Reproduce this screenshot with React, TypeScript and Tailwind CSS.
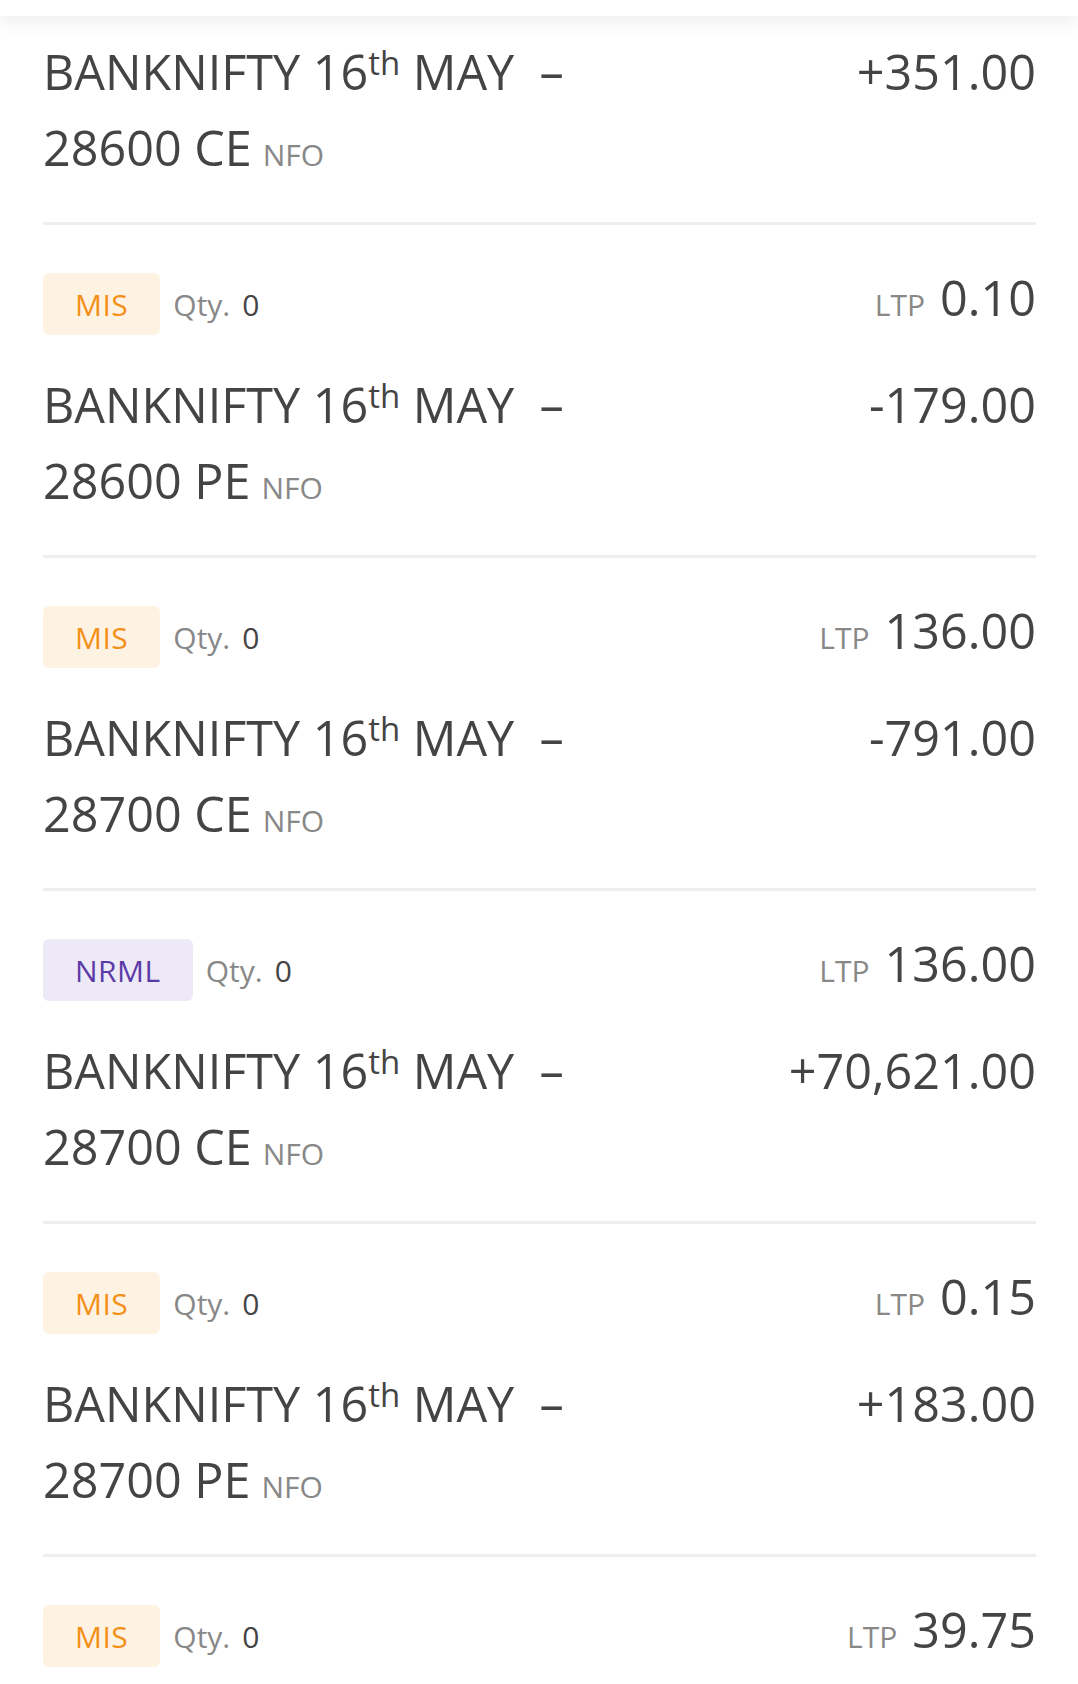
import React from 'react';

type Position = {
  product?: 'MIS' | 'NRML';
  ltp?: string;
  strike: string;
  pnl: string;
};

const positions: Position[] = [
  { strike: '28600 CE', pnl: '+351.00' },
  { product: 'MIS', ltp: '0.10', strike: '28600 PE', pnl: '-179.00' },
  { product: 'MIS', ltp: '136.00', strike: '28700 CE', pnl: '-791.00' },
  { product: 'NRML', ltp: '136.00', strike: '28700 CE', pnl: '+70,621.00' },
  { product: 'MIS', ltp: '0.15', strike: '28700 PE', pnl: '+183.00' },
  { product: 'MIS', ltp: '39.75', strike: '28700 CE', pnl: '+12.00' },
];

function ProductTag({ product }: { product: 'MIS' | 'NRML' }) {
  return (
    <span
      className={`h-[62px] px-[32px] rounded-md flex items-center text-[30px] tracking-[0.5px] ${
        product === 'MIS' ? 'bg-[#fef3e2] text-[#f39019]' : 'bg-[#ede9f7] text-[#5b3aa8]'
      }`}
    >
      {product}
    </span>
  );
}

function PositionRow({ pos, first }: { pos: Position; first?: boolean }) {
  return (
    <div className={`flex flex-col ${first ? 'pt-[17px]' : 'pt-[48px]'} pb-[29px]`}>
      {pos.product && (
        <div className="flex items-center justify-between h-[62px] mb-[31px]">
          <div className="flex items-center">
            <ProductTag product={pos.product} />
            <span className="ml-[13px] text-[30px] text-[#888]">Qty.</span>
            <span className="ml-[12px] text-[30px] text-[#444]">0</span>
          </div>
          <div className="flex items-baseline mb-[13px]">
            <span className="text-[30px] text-[#888]">LTP</span>
            <span className="ml-[15px] text-[48.5px] text-[#444]">{pos.ltp}</span>
          </div>
        </div>
      )}
      <div className="flex justify-between items-start text-[48.5px] leading-[76px] text-[#444]">
        <div>
          <div>
            BANKNIFTY 16<sup className="text-[33px] relative -top-[15px] align-baseline">th</sup> MAY&nbsp;&nbsp;–
          </div>
          <div>
            {pos.strike}
            <span className="ml-[11px] text-[30px] text-[#888]">NFO</span>
          </div>
        </div>
        <div>{pos.pnl}</div>
      </div>
    </div>
  );
}

export default function App() {
  return (
    <div
      className="w-[1078px] h-[1684px] overflow-hidden bg-white"
      style={{ fontFamily: '"Open Sans", "Noto Sans", sans-serif' }}
    >
      <div className="relative z-10 h-[16px] bg-white shadow-[0_6px_18px_rgba(0,0,0,0.08)]" />
      <div className="px-[43px] pr-[42px]">
        {positions.map((pos, i) => (
          <div key={i}>
            {i > 0 && <div className="h-[3px] bg-[#eeeeee]" />}
            <PositionRow pos={pos} first={i === 0} />
          </div>
        ))}
      </div>
    </div>
  );
}
